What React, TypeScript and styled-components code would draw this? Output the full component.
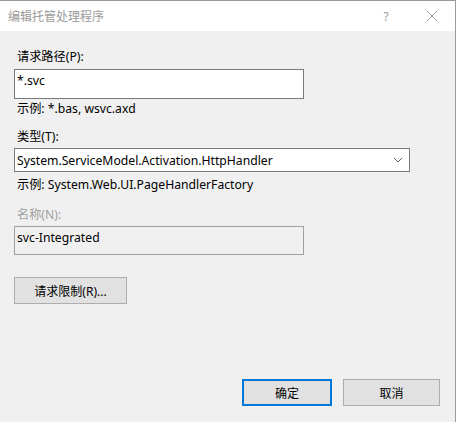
import React from "react";
import styled, { createGlobalStyle } from "styled-components";

const GlobalStyle = createGlobalStyle`
  html, body {
    margin: 0;
    padding: 0;
    background: #f0f0f0;
  }
  body {
    font-family: "Noto Sans", "Noto Sans CJK SC", sans-serif;
    font-size: 12.2px;
    color: #000;
  }
`;

// Dialog shell
const Dialog = styled.div`
  width: 456px;
  height: 422px;
  box-sizing: border-box;
  border-top: 1px solid #9a9a9a;
  border-right: 1px solid #9a9a9a;
  display: flex;
  flex-direction: column;
  background: #f0f0f0;
`;

const TitleBar = styled.div`
  height: 30px;
  background: #fff;
  display: flex;
  align-items: center;
  padding-left: 8px;
  color: #999;
  font-size: 12px;
`;

const TitleText = styled.span`
  flex: 1;
`;

const TitleButton = styled.div`
  width: 46px;
  height: 30px;
  display: flex;
  align-items: center;
  justify-content: center;
  color: #9a9a9a;
`;

const Body = styled.div`
  flex: 1;
  display: flex;
  flex-direction: column;
  padding: 18px 0 0 14px;
`;

const Label = styled.div<{ $disabled?: boolean }>`
  padding-left: 3px;
  line-height: 16px;
  color: ${(p) => (p.$disabled ? "#a0a0a0" : "#000")};
`;

const TextBox = styled.div<{ $readOnly?: boolean; $h: number; $w: number }>`
  box-sizing: border-box;
  width: ${(p) => p.$w}px;
  height: ${(p) => p.$h}px;
  border: 1px solid ${(p) => (p.$readOnly ? "#a0a0a0" : "#7a7a7a")};
  background: ${(p) => (p.$readOnly ? "#f0f0f0" : "#fff")};
  padding: 2px 0 0 2px;
  line-height: 18px;
`;

const Select = styled.div`
  box-sizing: border-box;
  width: 396px;
  height: 24px;
  border: 1px solid #7a7a7a;
  background: #fff;
  display: flex;
  align-items: center;
  padding: 0 6px 0 2px;
`;

const SelectText = styled.span`
  flex: 1;
`;

const Hint = styled.div`
  padding-left: 3px;
  line-height: 16px;
`;

const Button = styled.button<{ $default?: boolean; $w: number }>`
  box-sizing: border-box;
  width: ${(p) => p.$w}px;
  height: 27px;
  background: #e1e1e1;
  border: ${(p) => (p.$default ? "2px solid #0078d7" : "1px solid #adadad")};
  font-family: inherit;
  font-size: 12px;
  color: #000;
  padding: 0;
`;

const Footer = styled.div`
  margin-top: auto;
  display: flex;
  justify-content: flex-end;
  gap: 11px;
  padding: 0 15px 16px 0;
`;

const Gap = styled.div<{ $h: number }>`
  height: ${(p) => p.$h}px;
`;

const Chevron = () => (
  <svg width="10" height="6" viewBox="0 0 10 6">
    <path d="M1 1 L5 5 L9 1" fill="none" stroke="#606060" strokeWidth="1" />
  </svg>
);

const CloseIcon = () => (
  <svg width="12" height="12" viewBox="0 0 12 12">
    <path d="M1 1 L11 11 M11 1 L1 11" stroke="#9a9a9a" strokeWidth="1" />
  </svg>
);

export default function App() {
  return (
    <>
      <GlobalStyle />
      <Dialog>
        <TitleBar>
          <TitleText>编辑托管处理程序</TitleText>
          <TitleButton>?</TitleButton>
          <TitleButton>
            <CloseIcon />
          </TitleButton>
        </TitleBar>
        <Body>
          <Label>请求路径(P):</Label>
          <Gap $h={4} />
          <TextBox $w={290} $h={30}>*.svc</TextBox>
          <Gap $h={2} />
          <Hint>示例: *.bas, wsvc.axd</Hint>
          <Gap $h={12} />
          <Label>类型(T):</Label>
          <Gap $h={3} />
          <Select>
            <SelectText>System.ServiceModel.Activation.HttpHandler</SelectText>
            <Chevron />
          </Select>
          <Gap $h={5} />
          <Hint>示例: System.Web.UI.PageHandlerFactory</Hint>
          <Gap $h={14} />
          <Label $disabled>名称(N):</Label>
          <Gap $h={3} />
          <TextBox $w={290} $h={29} $readOnly>
            svc-Integrated
          </TextBox>
          <Gap $h={22} />
          <Button $w={113}>请求限制(R)...</Button>
          <Footer>
            <Button $w={90} $default>
              确定
            </Button>
            <Button $w={97}>取消</Button>
          </Footer>
        </Body>
      </Dialog>
    </>
  );
}
